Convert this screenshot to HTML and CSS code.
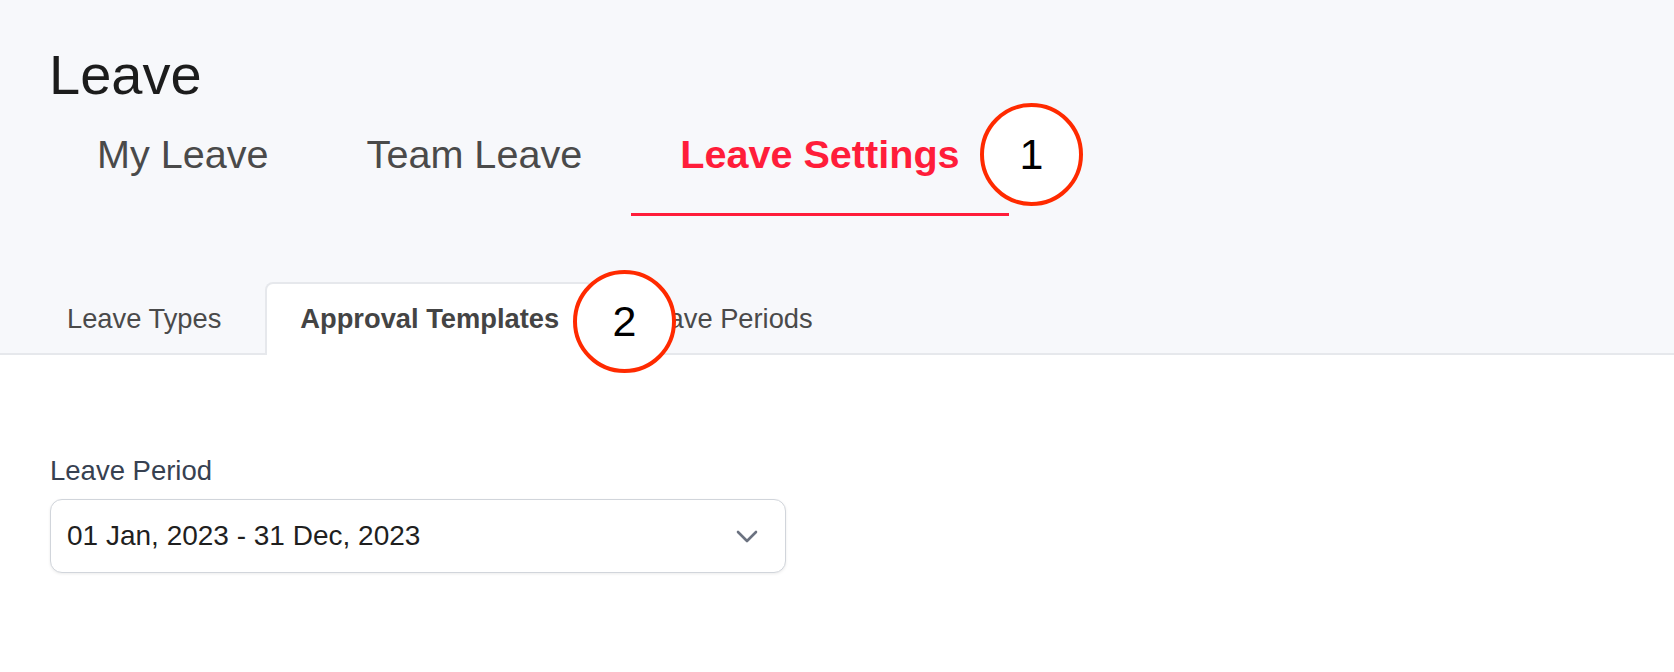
FILE: index.html
```html
<!DOCTYPE html>
<html lang="en">
<head>
<meta charset="utf-8">
<title>Leave</title>
<link rel="stylesheet" href="styles.css">
</head>
<body>
<header class="page-head">
  <h1 class="title">Leave</h1>
  <nav class="main-tabs">
    <a class="main-tab">My Leave</a>
    <a class="main-tab">Team Leave</a>
    <a class="main-tab active">Leave Settings</a>
  </nav>
  <div class="sub-tabs">
    <a class="sub-tab">Leave Types</a>
    <a class="sub-tab active">Approval Templates</a>
    <a class="sub-tab">Leave Periods</a>
  </div>
</header>
<main class="content">
  <label class="field-label">Leave Period</label>
  <div class="select">
    <span class="select-value">01 Jan, 2023 - 31 Dec, 2023</span>
    <svg class="chevron" width="22" height="13" viewBox="0 0 22 13" aria-hidden="true">
      <path d="M2 2 L11 11 L20 2" fill="none" stroke="#6b7280" stroke-width="2.6" stroke-linecap="round" stroke-linejoin="round"/>
    </svg>
  </div>
</main>
<div class="callout callout-1">1</div>
<div class="callout callout-2">2</div>
</body>
</html>
```

FILE: styles.css
```css
* { box-sizing: border-box; }

html, body {
  margin: 0;
  padding: 0;
  background: #ffffff;
  font-family: "Liberation Sans", Arial, Helvetica, sans-serif;
}

body {
  position: relative;
  width: 1674px;
  height: 672px;
  overflow: hidden;
}

.page-head {
  background: #f7f8fb;
  padding-top: 47px;
}

.title {
  margin: 0 0 0 49px;
  font-size: 56px;
  line-height: 56px;
  font-weight: 400;
  color: #1c1c1c;
}

.main-tabs {
  display: flex;
  padding-left: 48px;
}

.main-tab {
  padding: 26px 49px 34px;
  font-size: 39.6px;
  line-height: 50px;
  color: #4a4a4a;
  border-bottom: 3px solid transparent;
}

.main-tab.active {
  color: #ff1d3a;
  font-weight: 700;
  border-bottom-color: #ff1d3a;
}

.sub-tabs {
  display: flex;
  gap: 9px;
  padding: 66px 0 0 32px;
  border-bottom: 2px solid #e6e8ec;
}

.sub-tab {
  height: 73px;
  margin-bottom: -2px;
  padding: 20px 33px 0;
  font-size: 27.3px;
  line-height: 30px;
  color: #4a4a4a;
  border: 2px solid transparent;
  border-bottom: none;
  border-radius: 8px 8px 0 0;
}

.sub-tab.active {
  background: #ffffff;
  border-color: #e6e8ec;
  font-weight: 700;
  color: #444444;
}

.content {
  padding: 100px 0 0 50px;
}

.field-label {
  display: block;
  font-size: 27.5px;
  line-height: 32px;
  color: #374151;
  margin-bottom: 12px;
}

.select {
  display: flex;
  align-items: center;
  justify-content: space-between;
  width: 736px;
  height: 74px;
  padding: 0 27px 0 16px;
  border: 1.5px solid #d1d5db;
  border-radius: 12px;
  background: #ffffff;
  box-shadow: 0 1px 3px rgba(0, 0, 0, 0.08);
}

.select-value {
  font-size: 28px;
  color: #1f1f1f;
}

.chevron {
  display: block;
}

.callout {
  position: absolute;
  width: 103px;
  height: 103px;
  border: 4px solid #ff2a00;
  border-radius: 50%;
  background: #ffffff;
  display: flex;
  align-items: center;
  justify-content: center;
  font-size: 43px;
  color: #000000;
}

.callout-1 {
  left: 980px;
  top: 103px;
}

.callout-2 {
  left: 573px;
  top: 270px;
}
```
